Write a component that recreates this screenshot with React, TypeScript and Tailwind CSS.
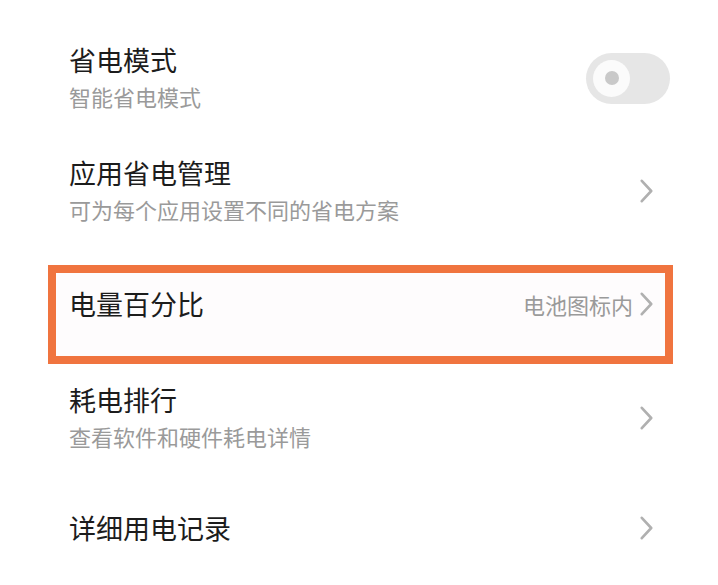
import React from "react";

const Chevron = () => (
  <svg width="13" height="24" viewBox="0 0 13 24" className="shrink-0">
    <polyline
      points="1.8,1.8 11.2,12 1.8,22.2"
      fill="none"
      stroke="#b0b0b0"
      strokeWidth="2.6"
      strokeLinecap="round"
      strokeLinejoin="round"
    />
  </svg>
);

const font = { fontFamily: '"Noto Sans CJK SC", "Noto Sans", sans-serif' };

function TwoLine({ title, sub }: { title: string; sub: string }) {
  return (
    <div className="flex flex-col">
      <div className="text-[27px] leading-[36px] text-[#1c1c1c]">{title}</div>
      <div className="text-[22px] leading-[36px] text-[#9a9a9a]">{sub}</div>
    </div>
  );
}

export default function App() {
  return (
    <div className="w-[718px] h-[585px] bg-white overflow-hidden flex flex-col pt-[23px]" style={font}>
      {/* Row 1 */}
      <div className="h-[111px] flex items-center justify-between pl-[69px] pr-[48px]">
        <TwoLine title="省电模式" sub="智能省电模式" />
        <div className="w-[84px] h-[51px] rounded-full bg-[#e6e6e6] flex items-center pl-[7px]">
          <div className="w-[37px] h-[37px] rounded-full bg-[#fbfbfb] flex items-center justify-center">
            <div className="w-[14px] h-[14px] rounded-full bg-[#c9c9c9]" />
          </div>
        </div>
      </div>
      {/* Row 2 */}
      <div className="h-[115px] flex items-center justify-between pl-[69px] pr-[65px]">
        <TwoLine title="应用省电管理" sub="可为每个应用设置不同的省电方案" />
        <Chevron />
      </div>
      {/* Row 3 highlighted */}
      <div className="mt-[16px] ml-[48px] w-[625px] h-[100px] border-[8px] border-[#f0743f] bg-[#fefcfd] pl-[13px] pr-[12px]">
        <div className="h-[63px] flex items-center justify-between">
          <div className="text-[27px] leading-[36px] text-[#1c1c1c]">电量百分比</div>
          <div className="flex items-center gap-[7px]">
            <span className="text-[22px] leading-[36px] text-[#9a9a9a]">电池图标内</span>
            <Chevron />
          </div>
        </div>
      </div>
      {/* Row 4 */}
      <div className="h-[107px] flex items-center justify-between pl-[69px] pr-[65px]">
        <TwoLine title="耗电排行" sub="查看软件和硬件耗电详情" />
        <Chevron />
      </div>
      {/* Row 5 */}
      <div className="h-[114px] flex items-center justify-between pl-[69px] pr-[65px]">
        <div className="text-[27px] leading-[36px] text-[#1c1c1c]">详细用电记录</div>
        <Chevron />
      </div>
    </div>
  );
}
